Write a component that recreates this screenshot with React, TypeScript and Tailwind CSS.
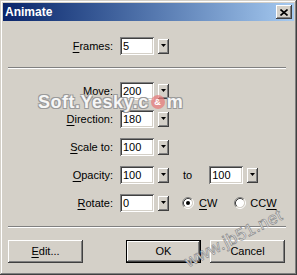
import React from 'react';

const sunken =
  'shadow-[inset_1px_1px_#808080,inset_-1px_-1px_#ffffff,inset_2px_2px_#404040,inset_-2px_-2px_#d4d0c8]';
const raised =
  'shadow-[inset_-1px_-1px_#404040,inset_1px_1px_#ffffff,inset_-2px_-2px_#808080,inset_2px_2px_#d4d0c8]';

const Field = ({ value }: { value: string }) => (
  <div className={`w-[34px] h-[18px] bg-white pl-[3px] flex items-center text-[11px] text-black ${sunken}`}>
    {value}
  </div>
);

const Drop = () => (
  <div className={`ml-[4px] w-[11px] h-[15px] bg-[#d4d0c8] flex items-center justify-center ${raised}`}>
    <svg width="5" height="3" viewBox="0 0 5 3" className="mb-[1px]">
      <path d="M0 0h5L2.5 3z" fill="#000" />
    </svg>
  </div>
);

const Radio = ({ checked }: { checked?: boolean }) => (
  <svg width="12" height="12" viewBox="0 0 12 12">
    <circle cx="6" cy="6" r="4.2" fill="#fff" />
    <path d="M2.11 9.89A5.5 5.5 0 0 1 9.89 2.11" stroke="#808080" fill="none" />
    <path d="M9.89 2.11A5.5 5.5 0 0 1 2.11 9.89" stroke="#fff" fill="none" />
    <path d="M2.82 9.18A4.5 4.5 0 0 1 9.18 2.82" stroke="#404040" fill="none" />
    <path d="M9.18 2.82A4.5 4.5 0 0 1 2.82 9.18" stroke="#d4d0c8" fill="none" />
    {checked && <circle cx="6" cy="6" r="2" fill="#000" />}
  </svg>
);

const Label = ({ k, rest }: { k: string; rest: string }) => (
  <span className="w-[110px] text-right shrink-0">
    <span className="underline underline-offset-[2px]">{k}</span>
    {rest}
  </span>
);

const Row = ({ k, rest, value, children }: { k: string; rest: string; value: string; children?: React.ReactNode }) => (
  <div className="flex items-center h-[18px]">
    <Label k={k} rest={rest} />
    <div className="ml-[7px]">
      <Field value={value} />
    </div>
    <Drop />
    {children}
  </div>
);

const Separator = ({ className }: { className: string }) => (
  <div className={`ml-[5px] w-[278px] h-[2px] border-t border-t-[#808080] border-b border-b-white ${className}`} />
);

const Button = ({ children, isDefault }: { children: React.ReactNode; isDefault?: boolean }) => (
  <div
    className={`w-[75px] h-[23px] flex items-center justify-center ${
      isDefault ? 'border border-black' : ''
    }`}
  >
    <div className={`w-full h-full flex items-center justify-center bg-[#d4d0c8] ${raised}`}>{children}</div>
  </div>
);

export default function App() {
  return (
    <div
      className="relative w-[297px] h-[275px] bg-[#d4d0c8] p-[3px] flex flex-col text-[11px] text-black shadow-[inset_-1px_-1px_#404040,inset_1px_1px_#d4d0c8,inset_-2px_-2px_#808080,inset_2px_2px_#ffffff]"
      style={{ fontFamily: '"Liberation Sans", Arial, sans-serif' }}
    >
      {/* title bar */}
      <div className="h-[18px] flex items-center justify-between bg-gradient-to-r from-[#0a246a] to-[#a6caf0] pl-[2px] pr-[2px]">
        <span className="text-white font-bold text-[12px] leading-none">Animate</span>
        <div className={`w-[16px] h-[14px] bg-[#d4d0c8] flex items-center justify-center ${raised}`}>
          <svg width="8" height="7" viewBox="0 0 8 7">
            <path d="M0.5 0.5L7.5 6.5M7.5 0.5L0.5 6.5" stroke="#000" strokeWidth="1.6" />
          </svg>
        </div>
      </div>

      <div className="flex flex-col pt-[16px]">
        <Row k="F" rest="rames:" value="5" />
        <Separator className="mt-[12px]" />

        <div className="flex flex-col gap-[10px] mt-[13px]">
          <Row k="M" rest="ove:" value="200" />
          <Row k="D" rest="irection:" value="180" />
          <Row k="S" rest="cale to:" value="100" />
          <Row k="O" rest="pacity:" value="100">
            <span className="ml-[14px]">to</span>
            <div className="ml-[17px]">
              <Field value="100" />
            </div>
            <Drop />
          </Row>
          <Row k="R" rest="otate:" value="0">
            <div className="ml-[13px] flex items-center">
              <Radio checked />
            </div>
            <span className="ml-[5px]">
              <span className="underline underline-offset-[2px]">C</span>W
            </span>
            <div className="ml-[17px] flex items-center">
              <Radio />
            </div>
            <span className="ml-[4px]">
              CC<span className="underline underline-offset-[2px]">W</span>
            </span>
          </Row>
        </div>

        <Separator className="mt-[14px]" />

        <div className="flex mt-[12px] ml-[5px]">
          <Button>
            <span>
              <span className="underline underline-offset-[2px]">E</span>dit...
            </span>
          </Button>
          <div className="ml-[43px]">
            <Button isDefault>OK</Button>
          </div>
          <div className="ml-[9px]">
            <Button>Cancel</Button>
          </div>
        </div>
      </div>

      {/* watermarks */}
      <div className="absolute left-[38px] top-[93px] pointer-events-none flex items-center text-[18px] leading-none font-bold text-[#f6f6f6] tracking-[0.5px] [text-shadow:1px_1px_0_#9a9a9a,-1px_-1px_0_#9a9a9a,1px_-1px_0_#9a9a9a,-1px_1px_0_#9a9a9a]">
        <span>Soft.Yesky.c</span>
        <span className="mx-[2px] w-[14px] h-[14px] rounded-full bg-[#e87878]/70 text-[9px] text-white flex items-center justify-center [text-shadow:none]">
          &amp;
        </span>
        <span>m</span>
      </div>
      <div className="absolute left-[186px] top-[254px] pointer-events-none origin-left -rotate-[27deg] text-[17px] leading-none tracking-[0.5px] text-[#f8f8f8] [-webkit-text-stroke:0.7px_#8a8a8a]">
        www.jb51.net
      </div>
    </div>
  );
}
